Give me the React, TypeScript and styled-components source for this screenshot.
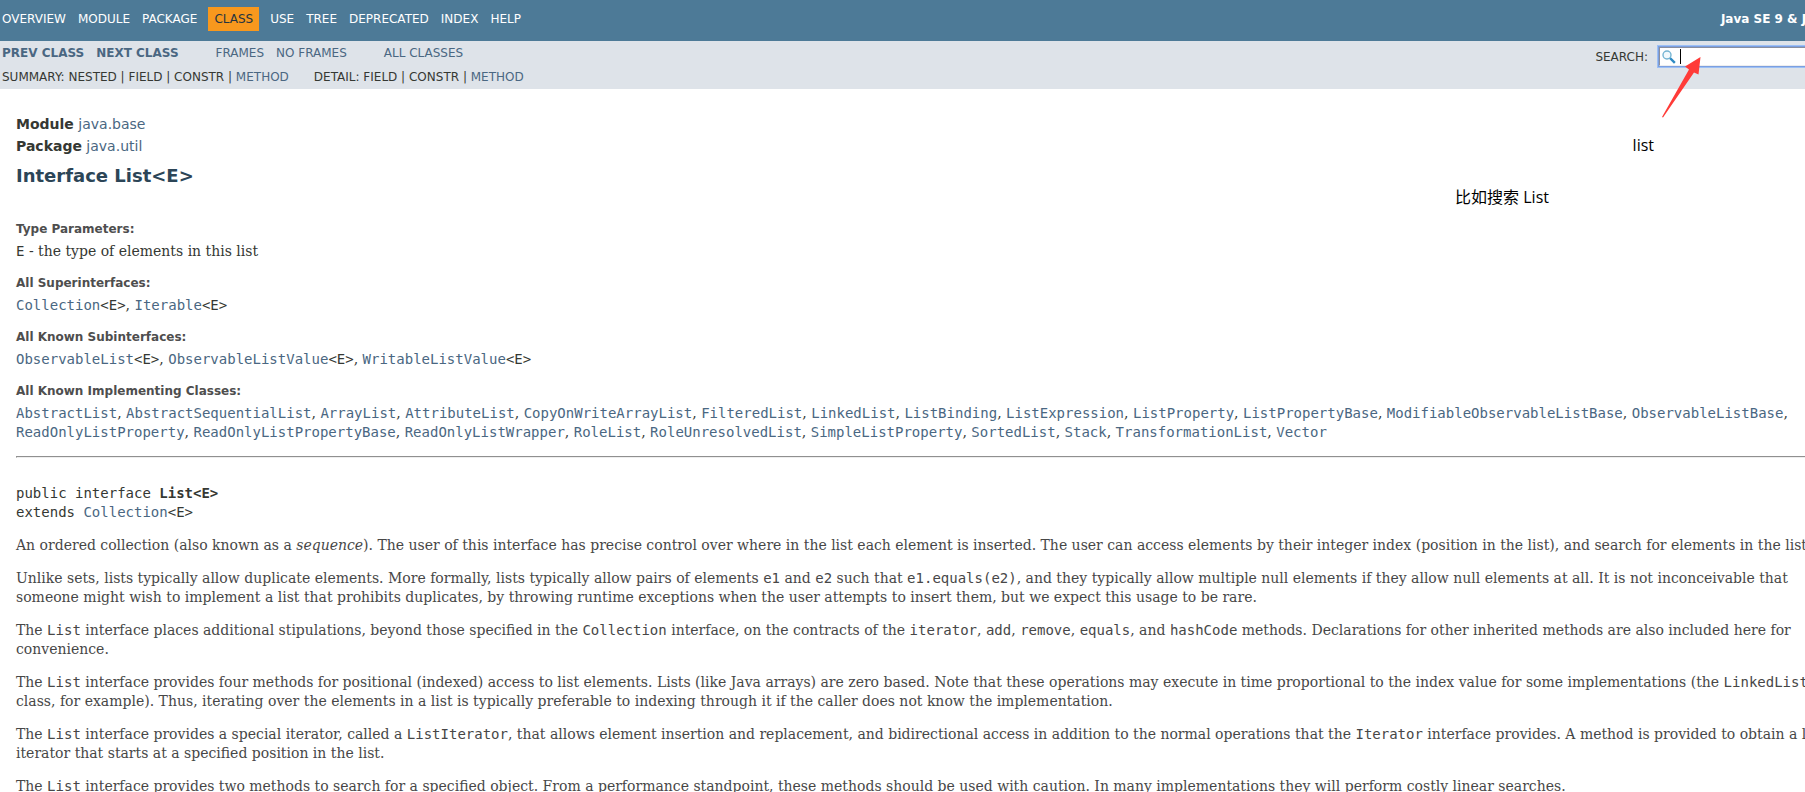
import React from 'react';
import styled, { createGlobalStyle } from 'styled-components';

const sans = `'DejaVu Sans', Arial, Helvetica, sans-serif`;
const serif = `'DejaVu Serif', Georgia, serif`;
const mono = `'DejaVu Sans Mono', monospace`;

const GlobalStyle = createGlobalStyle`
  body {
    margin: 0;
    background: #ffffff;
    color: #353833;
    font-family: ${sans};
    font-size: 14px;
    line-height: 19px;
    overflow: hidden;
  }
`;

/* The page runs a little wider than the window; the window clips it. */
const Page = styled.div`
  position: relative;
  width: calc(100% + 36px);
`;

const Link = styled.a`
  color: #4a6782;
  text-decoration: none;
`;

const TopNav = styled.nav`
  display: flex;
  justify-content: space-between;
  padding: 7px 3px 10px 0;
  background: #4d7a97;
  color: #ffffff;
  font-size: 12px;
  line-height: 14px;
`;

const TopList = styled.ul`
  display: flex;
  list-style: none;
  margin: 0 0 0 -4px;
  padding: 0;
  text-transform: uppercase;
`;

const TopItem = styled.li<{ $active?: boolean }>`
  padding: 5px 6px;
  margin: ${(p) => (p.$active ? '0 5px' : '0')};
  background: ${(p) => (p.$active ? '#f8981d' : 'transparent')};
  color: ${(p) => (p.$active ? '#253441' : '#ffffff')};
`;

const TopLink = styled.a`
  color: inherit;
  text-decoration: none;
`;

const About = styled.strong`
  padding: 5px 0;
  white-space: nowrap;
`;

const SubNav = styled.div`
  display: flex;
  justify-content: space-between;
  align-items: flex-start;
  background: #dee3e9;
  font-size: 12px;
  line-height: 14px;
`;

const SubRows = styled.div`
  display: flex;
  flex-direction: column;
  gap: 4px;
  padding: 2px 0 2px 2px;
`;

const SubRow = styled.div`
  display: flex;
  padding: 3px 0;
  text-transform: uppercase;
`;

const SubList = styled.ul`
  display: flex;
  gap: 12px;
  list-style: none;
  margin: 0;
  padding: 0;
`;

const LinkRow = styled(SubRow)`
  gap: 37px;
`;

const SummaryRow = styled(SubRow)`
  gap: 25px;
`;

const SearchForm = styled.form`
  display: flex;
  align-items: center;
  gap: 11px;
  padding-top: 6px;
`;

const SearchLabel = styled.label`
  font-size: 12px;
`;

const SearchField = styled.div`
  position: relative;
  display: flex;
`;

const SearchInput = styled.input`
  box-sizing: border-box;
  width: 182px;
  height: 19px;
  padding: 0 0 0 20px;
  border-style: solid;
  border-color: #8a8f9e #eeeeee #eeeeee #8a8f9e;
  border-width: 1px;
  border-radius: 0;
  background: #ffffff;
  box-shadow: 0 0 0 1px #7b9fe0, 0 0 0 2px #9dc0f5;
  font-family: ${sans};
  font-size: 13px;
  outline: none;
`;

const SearchIcon = styled.svg`
  position: absolute;
  left: 3px;
  top: 3px;
`;

const Caret = styled.span`
  position: absolute;
  left: 21px;
  top: 2px;
  width: 1px;
  height: 15px;
  background: #000000;
`;

const Header = styled.header`
  padding: 26px 16px 0;
`;

const SubTitle = styled.div`
  margin-bottom: 3px;
`;

const Title = styled.h2`
  margin: 9px 0 0;
  color: #2c4557;
  font-size: 18px;
  line-height: 22px;
`;

const Main = styled.main`
  padding: 33px 0 0 16px;
`;

const Facts = styled.dl`
  margin: 0 16px 0 0;
`;

const Term = styled.dt`
  color: #4e4e4e;
  font-size: 12px;
  font-weight: bold;
`;

const Detail = styled.dd`
  margin: 3px 0 13px;
  font-family: ${serif};
`;

const Code = styled.code`
  font-family: ${mono};
  font-size: 14px;
  line-height: 16px;
`;

const Rule = styled.hr`
  margin: 14px 0 26px;
  border: 1px solid;
  border-color: #909090 #eeeeee #eeeeee #909090;
`;

const Signature = styled.pre`
  margin: 0;
  font-family: ${mono};
  font-size: 14px;
`;

const Block = styled.div`
  margin-right: 4px;
  color: #474747;
  font-family: ${serif};
`;

const Para = styled.p`
  margin: 14px 0;
`;

const Note = styled.p<{ $top: number; $right: number }>`
  position: absolute;
  top: ${(p) => p.$top}px;
  right: ${(p) => p.$right}px;
  margin: 0;
  color: #000000;
  font-family: 'Open Sans', 'Noto Sans CJK SC', sans-serif;
  font-size: 16px;
  line-height: 20px;
  white-space: nowrap;
`;

const Arrow = styled.svg`
  position: absolute;
  top: 56px;
  right: 139px;
`;

const topItems = ['Overview', 'Module', 'Package', 'Class', 'Use', 'Tree', 'Deprecated', 'Index', 'Help'];

const subInterfaces = ['ObservableList', 'ObservableListValue', 'WritableListValue'];
const superInterfaces = ['Collection', 'Iterable'];
const implementers = [
  'AbstractList', 'AbstractSequentialList', 'ArrayList', 'AttributeList', 'CopyOnWriteArrayList',
  'FilteredList', 'LinkedList', 'ListBinding', 'ListExpression', 'ListProperty', 'ListPropertyBase',
  'ModifiableObservableListBase', 'ObservableListBase', 'ReadOnlyListProperty',
  'ReadOnlyListPropertyBase', 'ReadOnlyListWrapper', 'RoleList', 'RoleUnresolvedList',
  'SimpleListProperty', 'SortedList', 'Stack', 'TransformationList', 'Vector',
];

function TypeLinks({ names, generic }: { names: string[]; generic?: boolean }) {
  return (
    <>
      {names.map((name, i) => (
        <React.Fragment key={name}>
          {i > 0 && ', '}
          <Code>
            <Link href={`#${name}`}>{name}</Link>
            {generic && '<E>'}
          </Code>
        </React.Fragment>
      ))}
    </>
  );
}

export default function App() {
  return (
    <Page>
      <GlobalStyle />
      <TopNav>
        <TopList>
          {topItems.map((item) => (
            <TopItem key={item} $active={item === 'Class'}>
              {item === 'Class' ? item : <TopLink href={`#${item}`}>{item}</TopLink>}
            </TopItem>
          ))}
        </TopList>
        <About>Java SE 9 &amp; JDK 9</About>
      </TopNav>
      <SubNav>
        <SubRows>
          <LinkRow>
            <SubList>
              <li><Link href="#prev"><b>Prev Class</b></Link></li>
              <li><Link href="#next"><b>Next Class</b></Link></li>
            </SubList>
            <SubList>
              <li><Link href="#frames">Frames</Link></li>
              <li><Link href="#no-frames">No Frames</Link></li>
            </SubList>
            <SubList>
              <li><Link href="#all">All Classes</Link></li>
            </SubList>
          </LinkRow>
          <SummaryRow>
            <span>Summary: Nested | Field | Constr | <Link href="#method-summary">Method</Link></span>
            <span>Detail: Field | Constr | <Link href="#method-detail">Method</Link></span>
          </SummaryRow>
        </SubRows>
        <SearchForm>
          <SearchLabel htmlFor="search">SEARCH:</SearchLabel>
          <SearchField>
            <SearchInput id="search" type="text" />
            <SearchIcon width="14" height="14" viewBox="0 0 14 14" aria-hidden="true">
              <line x1="8" y1="8" x2="12" y2="12" stroke="#2f8bc4" strokeWidth="2.4" strokeLinecap="square" />
              <circle cx="5" cy="5" r="4" fill="#f2f9fc" stroke="#74b4d2" strokeWidth="1.4" />
            </SearchIcon>
            <Caret />
          </SearchField>
        </SearchForm>
      </SubNav>

      <Header>
        <SubTitle><b>Module</b> <Link href="#java.base">java.base</Link></SubTitle>
        <SubTitle><b>Package</b> <Link href="#java.util">java.util</Link></SubTitle>
        <Title>Interface List&lt;E&gt;</Title>
      </Header>

      <Main>
        <Facts>
          <Term>Type Parameters:</Term>
          <Detail><Code>E</Code> - the type of elements in this list</Detail>
          <Term>All Superinterfaces:</Term>
          <Detail><TypeLinks names={superInterfaces} generic /></Detail>
          <Term>All Known Subinterfaces:</Term>
          <Detail><TypeLinks names={subInterfaces} generic /></Detail>
          <Term>All Known Implementing Classes:</Term>
          <Detail><TypeLinks names={implementers} /></Detail>
        </Facts>
        <Rule />
        <Signature>
          public interface <b>List&lt;E&gt;</b>{'\n'}
          extends <Link href="#Collection">Collection</Link>&lt;E&gt;
        </Signature>
        <Block>
          <Para>
            An ordered collection (also known as a <i>sequence</i>). The user of this interface has precise control
            over where in the list each element is inserted. The user can access elements by their integer index
            (position in the list), and search for elements in the list.
          </Para>
          <Para>
            Unlike sets, lists typically allow duplicate elements. More formally, lists typically allow pairs of
            elements <Code>e1</Code> and <Code>e2</Code> such that <Code>e1.equals(e2)</Code>, and they typically
            allow multiple null elements if they allow null elements at all. It is not inconceivable that someone
            might wish to implement a list that prohibits duplicates, by throwing runtime exceptions when the user
            attempts to insert them, but we expect this usage to be rare.
          </Para>
          <Para>
            The <Code>List</Code> interface places additional stipulations, beyond those specified in
            the <Code>Collection</Code> interface, on the contracts of
            the <Code>iterator</Code>, <Code>add</Code>, <Code>remove</Code>, <Code>equals</Code>,
            and <Code>hashCode</Code> methods. Declarations for other inherited methods are also included here for
            convenience.
          </Para>
          <Para>
            The <Code>List</Code> interface provides four methods for positional (indexed) access to list elements.
            Lists (like Java arrays) are zero based. Note that these operations may execute in time proportional to
            the index value for some implementations (the <Code>LinkedList</Code> class, for example). Thus,
            iterating over the elements in a list is typically preferable to indexing through it if the caller does
            not know the implementation.
          </Para>
          <Para>
            The <Code>List</Code> interface provides a special iterator, called a <Code>ListIterator</Code>, that
            allows element insertion and replacement, and bidirectional access in addition to the normal operations
            that the <Code>Iterator</Code> interface provides. A method is provided to obtain a list iterator that
            starts at a specified position in the list.
          </Para>
          <Para>
            The <Code>List</Code> interface provides two methods to search for a specified object. From a performance
            standpoint, these methods should be used with caution. In many implementations they will perform costly
            linear searches.
          </Para>
        </Block>
      </Main>

      <Note $top={135} $right={187}>list</Note>
      <Note $top={187} $right={292}>比如搜索 List</Note>
      <Arrow width="41" height="62" viewBox="0 0 41 62" aria-hidden="true">
        <path d="M39.500 1 L24 10.500 L28 13.500 L1 61 L2 61.500 L33 16.500 L37.500 18.500 Z" fill="#ff3b38" />
      </Arrow>
    </Page>
  );
}
